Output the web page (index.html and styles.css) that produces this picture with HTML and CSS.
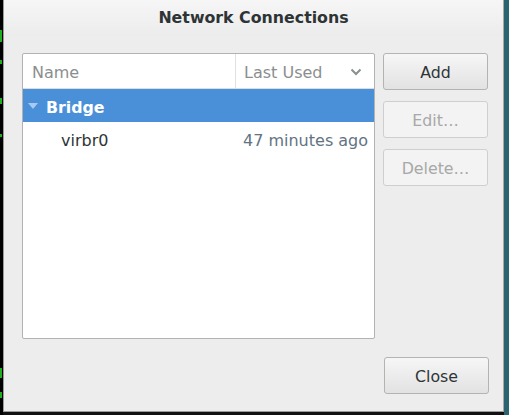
FILE: index.html
```html
<!DOCTYPE html>
<html>
<head>
<meta charset="utf-8">
<link rel="stylesheet" href="styles.css">
</head>
<body>
<div class="screen">
  <div class="term">
    <i class="g g1"></i>
    <i class="g g2"></i>
    <i class="g g3"></i>
    <i class="g g4"></i>
    <i class="g g5"></i>
    <i class="g g6"></i>
  </div>
  <div class="dialog">
    <div class="titlebar">Network Connections</div>
    <div class="content">
      <div class="main">
        <div class="tree">
          <div class="thead">
            <div class="th th-name">Name</div>
            <div class="th th-used"><span>Last Used</span>
              <svg class="chev" width="12" height="8" viewBox="0 0 12 8"><path d="M1.5 1.5 L6 6 L10.5 1.5" fill="none" stroke="#8b8e8f" stroke-width="2"/></svg>
            </div>
          </div>
          <div class="row row-sel">
            <svg class="tri" width="10" height="8" viewBox="0 0 10 8"><path d="M0 1 L10 1 L5 7 Z" fill="#a9c9ee"/></svg>
            <span class="grp">Bridge</span>
          </div>
          <div class="row">
            <span class="cell-name">virbr0</span>
            <span class="cell-used">47 minutes ago</span>
          </div>
        </div>
        <div class="btns">
          <button class="btn">Add</button>
          <button class="btn dis">Edit…</button>
          <button class="btn dis">Delete…</button>
        </div>
      </div>
      <div class="footer">
        <button class="btn close">Close</button>
      </div>
    </div>
  </div>
  <div class="desk"></div>
</div>
</body>
</html>
```
FILE: styles.css
```css
* { box-sizing: border-box; }
html, body { margin: 0; padding: 0; }
body {
  width: 509px;
  height: 415px;
  background: #111;
  font-family: "DejaVu Sans", "Open Sans", sans-serif;
  overflow: hidden;
}
.screen {
  display: flex;
  height: 415px;
}
.term {
  width: 3px;
  background: #000;
  position: relative;
  overflow: hidden;
}
.g {
  position: absolute;
  left: 0;
  width: 2px;
  background: #1fae1f;
}
.g1 { top: 30px; height: 12px; }
.g2 { top: 60px; height: 4px; }
.g3 { top: 98px; height: 6px; }
.g4 { top: 134px; height: 3px; }
.g5 { top: 368px; height: 10px; }
.g6 { top: 392px; height: 6px; }
.dialog {
  width: 501px;
  height: 412px;
  background: #ededed;
  border-left: 1px solid #9a9a9a;
  border-right: 1px solid #a8a8a8;
  border-bottom: 1px solid #9a9a9a;
  display: flex;
  flex-direction: column;
}
.titlebar {
  height: 36px;
  display: flex;
  align-items: center;
  justify-content: center;
  font-weight: bold;
  font-size: 15.8px;
  color: #2e3436;
  background: linear-gradient(#f6f6f6, #ececec);
  padding-bottom: 1px;
}
.content {
  padding: 17px 14px 0 18px;
}
.main {
  display: flex;
  gap: 8px;
  align-items: flex-start;
}
.tree {
  width: 353px;
  height: 286px;
  background: #fff;
  border: 1px solid #b2b2b2;
  border-radius: 2px;
}
.thead {
  display: flex;
  height: 35px;
  border-bottom: 1px solid #dcdcdc;
}
.th {
  display: flex;
  align-items: center;
  font-size: 16px;
  color: #8b8e8f;
  padding-top: 3px;
}
.th-name {
  width: 213px;
  padding-left: 9px;
  border-right: 1px solid #e0e0e0;
}
.th-used {
  flex: 1;
  padding-left: 8px;
  padding-right: 12px;
  justify-content: space-between;
}
.chev { margin-top: -2px; }
.row {
  height: 34px;
  display: flex;
  align-items: center;
  font-size: 16px;
  color: #2e3436;
  padding-top: 3px;
}
.row-sel {
  background: #4a90d9;
  color: #fff;
  height: 33px;
}
.tri { margin-left: 5px; margin-right: 8px; margin-top: -3px; }
.grp { font-weight: bold; font-size: 15.8px; }
.cell-name { width: 220px; padding-left: 38px; }
.cell-used { color: #627384; }
.btns {
  display: flex;
  flex-direction: column;
  gap: 11px;
}
.btn {
  width: 105px;
  height: 37px;
  font-family: inherit;
  font-size: 15.8px;
  color: #2e3436;
  background: linear-gradient(#f6f6f6, #e2e2e2);
  border: 1px solid #b3b3b0;
  border-radius: 3px;
  padding: 2px 0 0;
}
.btn.dis {
  background: #f3f3f3;
  border-color: #cfcfcf;
  color: #a7a8a7;
}
.footer {
  display: flex;
  justify-content: flex-end;
  margin-top: 18px;
}
.desk {
  flex: 1;
  background: #2a6470;
}
```
